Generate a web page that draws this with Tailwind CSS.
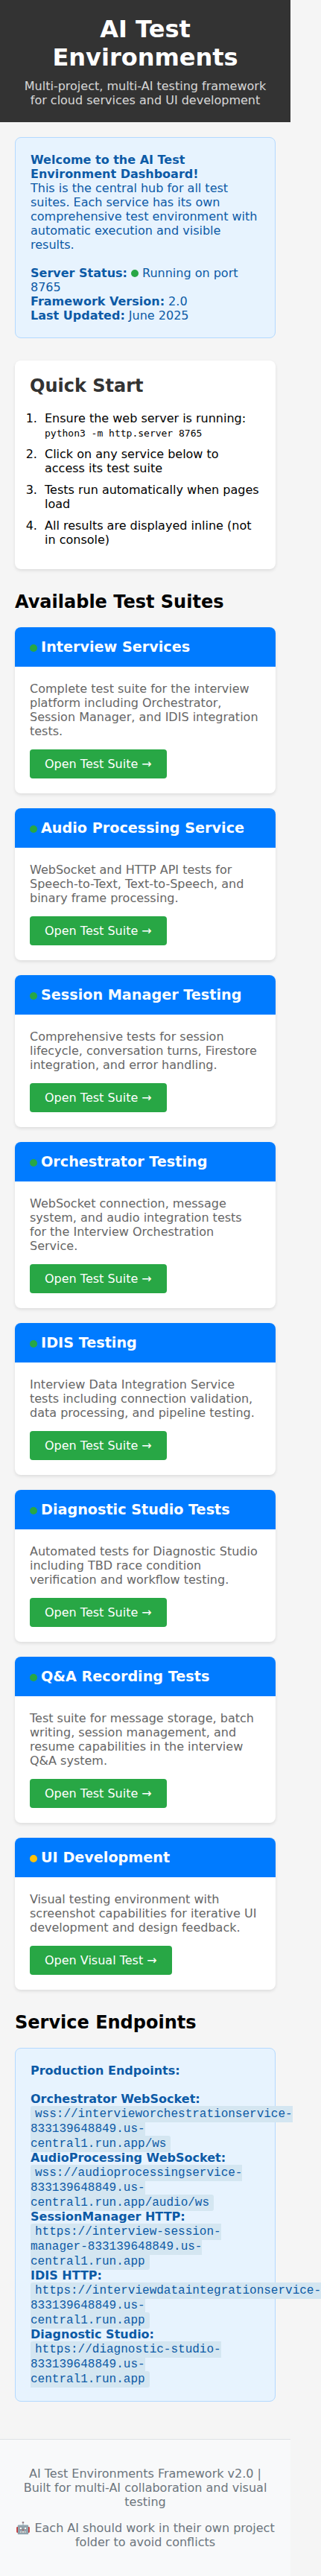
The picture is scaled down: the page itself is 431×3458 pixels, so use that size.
<!DOCTYPE html>
<html lang="en">
<head>
<meta charset="utf-8">
<title>AI Test Environments</title>
<script src="https://cdn.jsdelivr.net/npm/@tailwindcss/browser@4"></script>
</head>
<body class="bg-[#f5f5f5]">
<div class="w-[390px] font-['DejaVu_Sans',sans-serif] text-base leading-[normal] text-black">
  <header class="bg-[#333] p-5 text-center text-white">
    <h1 class="mb-2.5 text-[32px] leading-[38px] font-bold">AI Test Environments</h1>
    <p class="opacity-80">Multi-project, multi-AI testing framework for cloud services and UI development</p>
  </header>

  <main class="p-5">
    <section class="mb-[30px] rounded-lg border border-[#b3d9ff] bg-[#e7f3fe] p-5 text-[#0c5aa6]">
      <strong>Welcome to the AI Test Environment Dashboard!</strong><br>
      This is the central hub for all test suites. Each service has its own comprehensive test environment with automatic execution and visible results.<br><br>
      <strong>Server Status:</strong> <span class="mr-[5px] inline-block size-2.5 rounded-full bg-[#28a745] align-baseline"></span>Running on port 8765<br>
      <strong>Framework Version:</strong> 2.0<br>
      <strong>Last Updated:</strong> June 2025
    </section>

    <section class="mb-[30px] rounded-lg bg-white p-5 shadow-[0_2px_4px_rgba(0,0,0,0.1)]">
      <h2 class="mb-5 text-2xl leading-7 font-bold text-[#333]">Quick Start</h2>
      <ol class="list-decimal pl-[15px]">
        <li class="mb-2.5 pl-[5px]">Ensure the web server is running: <code class="font-['DejaVu_Sans_Mono',monospace] text-[13px] leading-[normal]">python3 -m http.server 8765</code></li>
        <li class="mb-2.5 pl-[5px]">Click on any service below to access its test suite</li>
        <li class="mb-2.5 pl-[5px]">Tests run automatically when pages load</li>
        <li class="pb-2.5 pl-[5px]">All results are displayed inline (not in console)</li>
      </ol>
    </section>

    <h2 class="mb-5 text-2xl leading-7 font-bold">Available Test Suites</h2>
    <div class="mb-[30px] grid gap-5">
      <article class="overflow-hidden rounded-lg bg-white shadow-[0_2px_4px_rgba(0,0,0,0.1)]">
        <h3 class="bg-[#007bff] px-5 py-[15px] text-[19.2px] leading-[23px] font-bold text-white"><span class="mr-[5px] inline-block size-2.5 rounded-full bg-[#28a745]"></span>Interview Services</h3>
        <div class="p-5">
          <p class="mb-[15px] text-[#666]">Complete test suite for the interview platform including Orchestrator, Session Manager, and IDIS integration tests.</p>
          <a class="inline-block rounded bg-[#28a745] px-5 py-2.5 align-top text-white">Open Test Suite →</a>
        </div>
      </article>
      <article class="overflow-hidden rounded-lg bg-white shadow-[0_2px_4px_rgba(0,0,0,0.1)]">
        <h3 class="bg-[#007bff] px-5 py-[15px] text-[19.2px] leading-[23px] font-bold text-white"><span class="mr-[5px] inline-block size-2.5 rounded-full bg-[#28a745]"></span>Audio Processing Service</h3>
        <div class="p-5">
          <p class="mb-[15px] text-[#666]">WebSocket and HTTP API tests for Speech-to-Text, Text-to-Speech, and binary frame processing.</p>
          <a class="inline-block rounded bg-[#28a745] px-5 py-2.5 align-top text-white">Open Test Suite →</a>
        </div>
      </article>
      <article class="overflow-hidden rounded-lg bg-white shadow-[0_2px_4px_rgba(0,0,0,0.1)]">
        <h3 class="bg-[#007bff] px-5 py-[15px] text-[19.2px] leading-[23px] font-bold text-white"><span class="mr-[5px] inline-block size-2.5 rounded-full bg-[#28a745]"></span>Session Manager Testing</h3>
        <div class="p-5">
          <p class="mb-[15px] text-[#666]">Comprehensive tests for session lifecycle, conversation turns, Firestore integration, and error handling.</p>
          <a class="inline-block rounded bg-[#28a745] px-5 py-2.5 align-top text-white">Open Test Suite →</a>
        </div>
      </article>
      <article class="overflow-hidden rounded-lg bg-white shadow-[0_2px_4px_rgba(0,0,0,0.1)]">
        <h3 class="bg-[#007bff] px-5 py-[15px] text-[19.2px] leading-[23px] font-bold text-white"><span class="mr-[5px] inline-block size-2.5 rounded-full bg-[#28a745]"></span>Orchestrator Testing</h3>
        <div class="p-5">
          <p class="mb-[15px] text-[#666]">WebSocket connection, message system, and audio integration tests for the Interview Orchestration Service.</p>
          <a class="inline-block rounded bg-[#28a745] px-5 py-2.5 align-top text-white">Open Test Suite →</a>
        </div>
      </article>
      <article class="overflow-hidden rounded-lg bg-white shadow-[0_2px_4px_rgba(0,0,0,0.1)]">
        <h3 class="bg-[#007bff] px-5 py-[15px] text-[19.2px] leading-[23px] font-bold text-white"><span class="mr-[5px] inline-block size-2.5 rounded-full bg-[#28a745]"></span>IDIS Testing</h3>
        <div class="p-5">
          <p class="mb-[15px] text-[#666]">Interview Data Integration Service tests including connection validation, data processing, and pipeline testing.</p>
          <a class="inline-block rounded bg-[#28a745] px-5 py-2.5 align-top text-white">Open Test Suite →</a>
        </div>
      </article>
      <article class="overflow-hidden rounded-lg bg-white shadow-[0_2px_4px_rgba(0,0,0,0.1)]">
        <h3 class="bg-[#007bff] px-5 py-[15px] text-[19.2px] leading-[23px] font-bold text-white"><span class="mr-[5px] inline-block size-2.5 rounded-full bg-[#28a745]"></span>Diagnostic Studio Tests</h3>
        <div class="p-5">
          <p class="mb-[15px] text-[#666]">Automated tests for Diagnostic Studio including TBD race condition verification and workflow testing.</p>
          <a class="inline-block rounded bg-[#28a745] px-5 py-2.5 align-top text-white">Open Test Suite →</a>
        </div>
      </article>
      <article class="overflow-hidden rounded-lg bg-white shadow-[0_2px_4px_rgba(0,0,0,0.1)]">
        <h3 class="bg-[#007bff] px-5 py-[15px] text-[19.2px] leading-[23px] font-bold text-white"><span class="mr-[5px] inline-block size-2.5 rounded-full bg-[#28a745]"></span>Q&amp;A Recording Tests</h3>
        <div class="p-5">
          <p class="mb-[15px] text-[#666]">Test suite for message storage, batch writing, session management, and resume capabilities in the interview Q&amp;A system.</p>
          <a class="inline-block rounded bg-[#28a745] px-5 py-2.5 align-top text-white">Open Test Suite →</a>
        </div>
      </article>
      <article class="overflow-hidden rounded-lg bg-white shadow-[0_2px_4px_rgba(0,0,0,0.1)]">
        <h3 class="bg-[#007bff] px-5 py-[15px] text-[19.2px] leading-[23px] font-bold text-white"><span class="mr-[5px] inline-block size-2.5 rounded-full bg-[#ffc107]"></span>UI Development</h3>
        <div class="p-5">
          <p class="mb-[15px] text-[#666]">Visual testing environment with screenshot capabilities for iterative UI development and design feedback.</p>
          <a class="inline-block rounded bg-[#28a745] px-5 py-2.5 align-top text-white">Open Visual Test →</a>
        </div>
      </article>
    </div>

    <h2 class="mb-5 text-2xl leading-7 font-bold">Service Endpoints</h2>
    <section class="mb-[30px] rounded-lg border border-[#b3d9ff] bg-[#e7f3fe] p-5 text-[#0c5aa6]">
      <strong>Production Endpoints:</strong><br><br>
      <strong>Orchestrator WebSocket:</strong> <code class="rounded-[3px] bg-[#d4e6f1] px-1.5 py-0.5 font-['Liberation_Mono',monospace] text-[16px] leading-[normal]">wss://intervieworchestrationservice-833139648849.us-central1.run.app/ws</code><br>
      <strong>AudioProcessing WebSocket:</strong> <code class="rounded-[3px] bg-[#d4e6f1] px-1.5 py-0.5 font-['Liberation_Mono',monospace] text-[16px] leading-[normal]">wss://audioprocessingservice-833139648849.us-central1.run.app/audio/ws</code><br>
      <strong>SessionManager HTTP:</strong> <code class="rounded-[3px] bg-[#d4e6f1] px-1.5 py-0.5 font-['Liberation_Mono',monospace] text-[16px] leading-[normal]">https://interview-session-manager-833139648849.us-central1.run.app</code><br>
      <strong>IDIS HTTP:</strong> <code class="rounded-[3px] bg-[#d4e6f1] px-1.5 py-0.5 font-['Liberation_Mono',monospace] text-[16px] leading-[normal]">https://interviewdataintegrationservice-833139648849.us-central1.run.app</code><br>
      <strong>Diagnostic Studio:</strong> <code class="rounded-[3px] bg-[#d4e6f1] px-1.5 py-0.5 font-['Liberation_Mono',monospace] text-[16px] leading-[normal]">https://diagnostic-studio-833139648849.us-central1.run.app</code>
    </section>
  </main>

  <footer class="border-t border-[#dee2e6] bg-[#f8f9fa] px-5 py-9 text-center text-[#6c757d]">
    <p class="mb-4">AI Test Environments Framework v2.0 | Built for multi-AI collaboration and visual testing</p>
    <p>🤖 Each AI should work in their own project folder to avoid conflicts</p>
  </footer>
</div>
</body>
</html>
